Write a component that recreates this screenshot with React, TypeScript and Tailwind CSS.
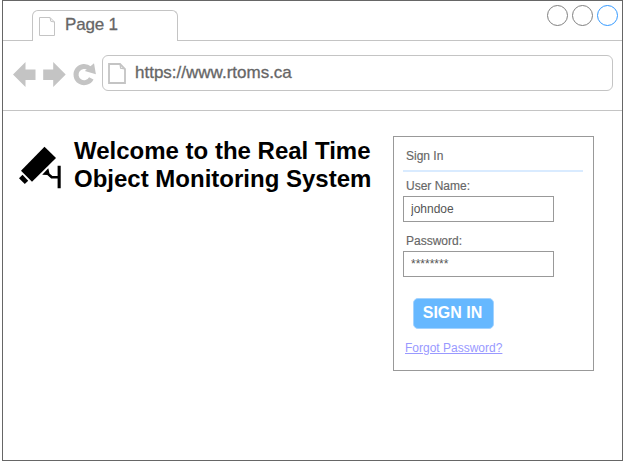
import React from "react";

function NavIcons() {
  return (
    <svg className="h-[26px] w-[84px] shrink-0" viewBox="0 0 84 26" fill="#c4c4c4">
      <path d="M0 12.5L12.5 0V7.5H22.5V18H12.5V25Z" />
      <path d="M52.7 12.5L40.2 0V7.5H30.2V18H40.2V25Z" />
      <path d="M78.3 16.3A8.1 8.1 0 1 1 76.6 6.6" fill="none" stroke="#c4c4c4" strokeWidth="5" />
      <path d="M81 1.2L82.9 12.2L71.8 9Z" />
    </svg>
  );
}

function CameraIcon() {
  return (
    <svg className="mt-[10px] h-[43px] w-[43px] shrink-0" viewBox="0 0 43 43" fill="#000">
      <path d="M25.5 0.7L37 11.9L13 35.8L2 24.7Z" />
      <path d="M3.5 28.8L9.2 34.7L5.8 38L0 32.2Z" />
      <path d="M23.2 28.7L29.3 22.3L30.5 27.6L33.4 29.9H38.6V19.8H41.7V42.3H38.6V32.5H32.2L28.3 28.9Z" />
    </svg>
  );
}

function Field({ label, value }: { label: string; value: string }) {
  return (
    <label className="block h-[55px] text-xs text-[#666666]">
      <span className="block h-[17px] pl-[3px] leading-[14px] [-webkit-text-stroke:0.15px_#666666]">{label}</span>
      <input
        readOnly
        defaultValue={value}
        className="block h-[26px] w-[151px] rounded-none border border-[#999999] bg-white px-[7px] pb-px text-xs text-[#555555] outline-none"
      />
    </label>
  );
}

export default function App() {
  return (
    <div className="h-[462px] w-[623px] overflow-hidden bg-white pl-[2px] font-['Liberation_Sans',Helvetica,Arial,sans-serif]">
      <div className="h-[461px] w-[621px] border border-[#666666]">
        <header className="flex h-[40px] items-end">
          <div className="h-px w-[29px] bg-[#c4c4c4]" />
          <div className="flex h-[31px] w-[146px] rounded-t-[6px] border border-b-0 border-[#c4c4c4] pl-[6px]">
            <svg className="mt-[6px] h-[19px] w-[16px] shrink-0" viewBox="0 0 16 19" fill="none" stroke="#c4c4c4">
              <path d="M0.5 0.5H11L15.5 5V18.5H0.5ZM11 0.5L11.8 4.3L15.5 5" />
            </svg>
            <span className="ml-[10px] mt-[4px] text-[17px] leading-[20px] tracking-[-0.2px] text-[#666666] [-webkit-text-stroke:0.3px_#666666]">Page 1</span>
          </div>
          <div className="h-full flex-1 border-b border-[#c4c4c4]">
            <div className="flex justify-end gap-[4px] pr-[4px] pt-[4px]">
              <span className="size-[21px] rounded-full border border-[#808080]" />
              <span className="size-[21px] rounded-full border border-[#808080]" />
              <span className="size-[21px] rounded-full border border-[#3399ff]" />
            </div>
          </div>
        </header>
        <nav className="flex h-[70px] border-b border-[#c4c4c4] pl-[10px] pt-[14px]">
          <div className="mt-[7px]"><NavIcons /></div>
          <div className="ml-[5px] flex h-[36px] w-[511px] rounded-[6px] border border-[#c4c4c4] pl-[5px]">
            <svg className="mt-[7px] h-[21px] w-[18px] shrink-0" viewBox="0 0 18 21" fill="none" stroke="#c4c4c4">
              <path strokeWidth="1.8" d="M1 1H12L17 6V20H1Z" />
              <path strokeWidth="1.2" d="M12 1L12.6 5.2L17 6" />
            </svg>
            <span className="ml-[9px] mt-[7px] text-[17px] leading-[20px] text-[#666666] [-webkit-text-stroke:0.3px_#666666]">https://www.rtoms.ca</span>
          </div>
        </nav>
        <main className="flex pl-[16px] pt-[25px]">
          <CameraIcon />
          <h1 className="ml-[12px] mt-px w-[319px] whitespace-nowrap text-2xl font-bold leading-[28px] text-black">
            Welcome to the Real Time
            <br />
            Object Monitoring System
          </h1>
          <form className="h-[235px] w-[201px] shrink-0 border border-[#999999] pl-[9px] pt-[12px]">
            <h2 className="h-[23px] w-[180px] border-b-2 border-[#d9ebff] pl-[3px] text-xs leading-[14px] text-[#666666] [-webkit-text-stroke:0.15px_#666666]">Sign In</h2>
            <div className="pt-[7px]">
              <Field label="User Name:" value="johndoe" />
              <Field label="Password:" value="********" />
            </div>
            <button type="button" className="ml-[10px] mt-[9px] block h-[31px] w-[81px] rounded-[5px] border border-[#a3d3ff] bg-[#66b8ff] pb-[2px] pr-[2px] text-base font-bold leading-[20px] text-white">
              SIGN IN
            </button>
            <a className="ml-[2px] mt-[12px] block text-xs leading-[14px] text-[#9999ff] underline">Forgot Password?</a>
          </form>
        </main>
      </div>
    </div>
  );
}
